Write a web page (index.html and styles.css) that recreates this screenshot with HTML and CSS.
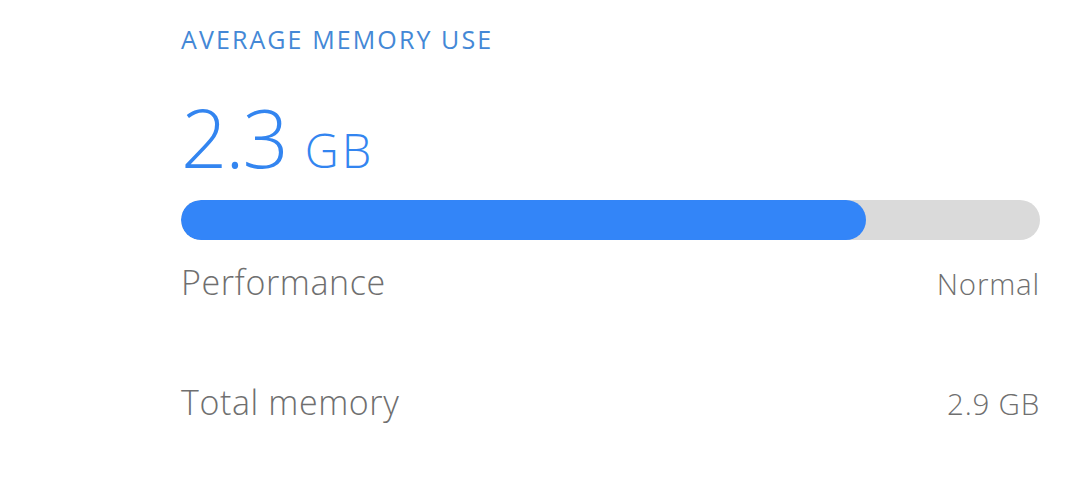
FILE: index.html
```html
<!DOCTYPE html>
<html lang="en">
<head>
    <meta charset="UTF-8">
    <title>Memory</title>
    <link rel="stylesheet" href="styles.css">
</head>
<body>

<div class="memory-card">
    <div class="section-title">AVERAGE MEMORY USE</div>

    <div class="usage">
        <span class="usage-value">2.3</span>
        <span class="usage-unit">GB</span>
    </div>

    <div class="bar">
        <div class="bar-fill" style="width: 79.8%;"></div>
    </div>

    <div class="info-row row-performance">
        <span class="info-label">Performance</span>
        <span class="info-value">Normal</span>
    </div>

    <div class="info-row row-total">
        <span class="info-label">Total memory</span>
        <span class="info-value">2.9 GB</span>
    </div>
</div>

</body>
</html>
```

FILE: styles.css
```css
body {
    margin: 0;
    background-color: #ffffff;
    font-family: 'Open Sans', 'Lato', sans-serif;
}

.memory-card {
    padding: 24px 40px 0 181px;
}

/* Section heading */
.section-title {
    color: #4488d6;
    font-size: 25px;
    letter-spacing: 2.1px;
    line-height: 30px;
}

.usage {
    display: flex;
    align-items: baseline;
    gap: 18px;
    margin-top: 43px;
    color: #3385f0;
    font-weight: 300;
    line-height: 80px;
}

.usage-value {
    font-size: 81px;
    letter-spacing: -2px;
}

.usage-unit {
    font-size: 47px;
    letter-spacing: 3px;
}

/* Progress bar */
.bar {
    height: 40px;
    margin-top: 10px;
    border-radius: 20px;
    background-color: #dadada;
    overflow: hidden;
}

.bar-fill {
    height: 100%;
    border-radius: 20px;
    background-color: #3385f8;
}

.info-row {
    display: flex;
    justify-content: space-between;
    align-items: baseline;
    color: #6f6f6f;
    font-weight: 300;
    line-height: 40px;
}

.row-performance {
    margin-top: 22px;
}

.row-total {
    margin-top: 78px;
}

.info-label {
    font-size: 34px;
    letter-spacing: 0.6px;
}

.info-value {
    font-size: 29.5px;
    letter-spacing: 0.8px;
}
```
